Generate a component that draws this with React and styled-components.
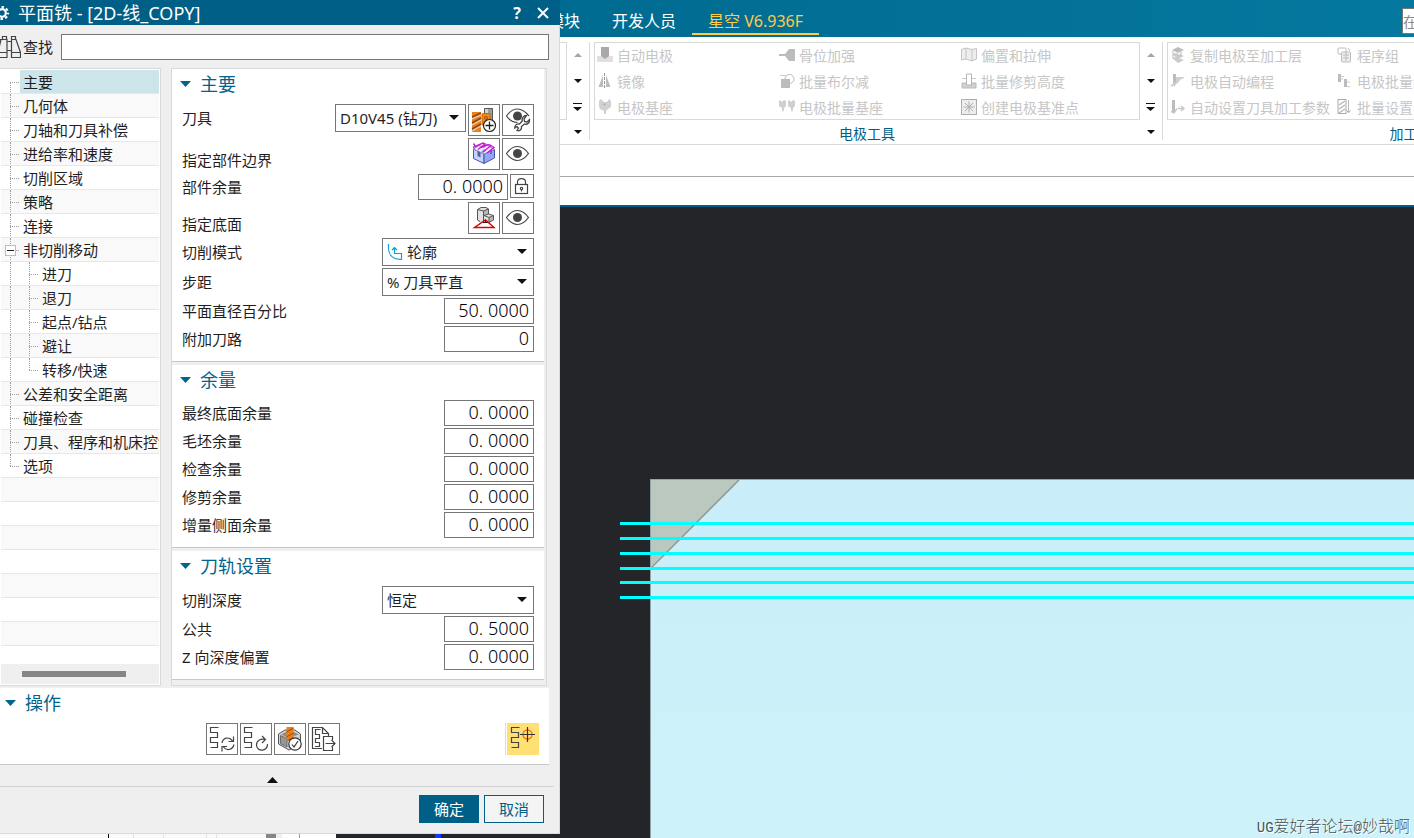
import React from "react";
import styled, { createGlobalStyle, css } from "styled-components";

const color = {
  brand: "#005f87",
  heading: "#00658c",
  accent: "#ffc94a",
  surface: "#efefef",
  line: "#d9d9d9",
  rule: "#c8c8c8",
  control: "#767676",
  text: "#1f1f1f",
  disabled: "#c6c6c6",
  canvas: "#242529",
};

const GlobalStyle = createGlobalStyle`
  *, *::before, *::after { box-sizing: border-box; }
  body {
    margin: 0;
    background: ${color.canvas};
    color: ${color.text};
    font: 15px/24px "Noto Sans", "Noto Sans CJK SC", sans-serif;
  }
  button, input, select { font: inherit; color: inherit; margin: 0; border-radius: 0; }
  h1, h2, h3, ul, p { margin: 0; padding: 0; font-weight: inherit; }
  ul { list-style: none; }
  svg { display: block; flex: none; }
`;

const Screen = styled.div`
  display: flex;
  min-height: 100vh;
  overflow: hidden;
`;

/* ---------- dialog ---------- */

const DialogColumn = styled.div`
  flex: none;
  width: 560px;
  display: flex;
  flex-direction: column;
`;

const DialogFrame = styled.section`
  background: ${color.surface};
  border-right: 1px solid ${color.line};
  border-bottom: 1px solid ${color.line};
`;

const TitleBar = styled.header`
  display: flex;
  align-items: center;
  height: 25px;
  margin-right: -1px;
  padding-right: 4px;
  background: ${color.brand};
  color: #fff;
  overflow: hidden;
`;

const Title = styled.h1`
  flex: 1;
  padding-left: 8px;
  font-size: 18px;
  line-height: 22px;
`;

const TitleButton = styled.button`
  display: grid;
  place-items: center;
  width: 26px;
  height: 24px;
  padding: 0;
  border: 0;
  background: none;
  font-size: 16px;
  font-weight: 700;
`;

const SearchRow = styled.div`
  display: flex;
  align-items: center;
  height: 43px;
  padding-right: 10px;
  label { padding: 0 8px 0 2px; }
`;

const SearchBox = styled.input`
  flex: 1;
  min-width: 0;
  height: 26px;
  padding: 0 6px;
  background: #fff;
  border: 1px solid ${color.control};
  outline: 0;
`;

const Panes = styled.div`
  display: flex;
  align-items: stretch;
  gap: 10px;
  padding-right: 12px;
`;

const NavPane = styled.nav`
  width: 161px;
  display: flex;
  flex-direction: column;
  justify-content: space-between;
  padding: 1px;
  background: #fff;
  border: 1px solid ${color.line};
  border-left: 0;
`;

const NavRow = styled.li`
  position: relative;
  display: flex;
  height: 24px;
  padding-left: ${(p) => (p.$level ? 38 : 19)}px;
  border-bottom: 1px solid #e8e8e8;
  background: #fff;
  overflow: hidden;
  &:nth-child(even) { background: #f9f9f9; }
`;

const dots = "#9c9c9c";

const Guide = styled.span`
  position: absolute;
  top: ${(p) => (p.$start ? 12 : 0)}px;
  left: ${(p) => (p.$level ? 28 : 9)}px;
  width: 9px;
  height: ${(p) => (p.$end ? 12 : 24)}px;
  border-left: 1px dotted ${dots};
`;

const Branch = styled.span`
  position: absolute;
  top: 12px;
  left: ${(p) => (p.$level ? 28 : 9)}px;
  width: 9px;
  border-top: 1px dotted ${dots};
`;

const Expander = styled.button`
  position: absolute;
  top: 7px;
  left: 4px;
  width: 11px;
  height: 11px;
  padding: 0;
  border: 1px solid #bdbdbd;
  background: #fff;
  &::before {
    content: "";
    position: absolute;
    inset: 4px 1px auto;
    border-top: 1px solid #222;
  }
`;

const NavLink = styled.a`
  flex: 1;
  padding-left: 3px;
  color: inherit;
  line-height: 24px;
  text-decoration: none;
  white-space: nowrap;
  overflow: hidden;
  ${(p) => p.$active && css`background: #cce5ea;`}
`;

const ScrollTrack = styled.div`
  height: 20px;
  padding: 7px 33px 7px 21px;
  background: ${color.surface};
  &::before {
    content: "";
    display: block;
    height: 6px;
    background: #868686;
  }
`;

const FormPane = styled.div`
  flex: 1;
  padding: 0 2px 5px 0;
  border: 1px solid ${color.line};
`;

const Group = styled.section`
  padding-bottom: 9px;
  background: #fff;
  border-bottom: 1px solid ${color.rule};
  & + & { margin-top: 3px; }
`;

const GroupHeading = styled.h2`
  display: flex;
  align-items: center;
  gap: 9px;
  height: 30px;
  margin-bottom: 5px;
  padding-left: ${(p) => (p.$flush ? 5 : 8)}px;
  color: ${color.heading};
  font-size: 18px;
  line-height: 28px;
`;

const Rows = styled.div`
  display: grid;
  gap: 2px;
  padding: 0 10px;
`;

const FieldRow = styled.div`
  display: flex;
  justify-content: space-between;
  align-items: ${(p) => (p.$align ? p.$align : "center")};
  min-height: ${(p) => (p.$tall ? 34 : 26)}px;
`;

const FieldLabel = styled.label`
  line-height: ${(p) => (p.$high ? 28 : 24)}px;
`;

const Controls = styled.div`
  display: flex;
  align-self: ${(p) => (p.$top ? "flex-start" : "auto")};
  align-items: flex-start;
  gap: 2px;
`;

const NumberInput = styled.input`
  width: 90px;
  height: 26px;
  padding: 0 4px 2px;
  border: 1px solid ${color.control};
  background: #fff;
  font-size: 18px;
  font-weight: 300;
  color: #000;
  line-height: 22px;
  text-align: right;
  outline: 0;
`;

const SelectWrap = styled.span`
  position: relative;
  display: block;
  width: ${(p) => (p.$narrow ? 131 : 152)}px;
  svg { position: absolute; pointer-events: none; }
  .arrow { right: 7px; top: 11px; }
  .glyph { left: 5px; top: 5px; }
`;

const SelectBox = styled.select`
  display: block;
  appearance: none;
  width: 100%;
  height: 28px;
  padding: 0 20px 0 ${(p) => (p.$glyph ? 24 : 4)}px;
  border: 1px solid ${color.control};
  background: #fff;
  outline: 0;
`;

const IconButton = styled.button`
  display: grid;
  place-items: center;
  width: ${(p) => p.$size || 32}px;
  height: ${(p) => p.$size || 32}px;
  padding: 0;
  border: 1px solid ${color.control};
  background: #fff;
  ${(p) =>
    p.$on &&
    css`
      border-color: #ffe075;
      background: #ffe075;
    `}
`;

const ActionGroup = styled(Group)`
  margin: 2px 10px 0 0;
`;

const ActionBar = styled.div`
  display: grid;
  grid-template-columns: 1fr auto 1fr;
  padding: 0 10px 0 6px;
`;

const ActionSet = styled.div`
  grid-column: 2;
  display: flex;
  gap: 2px;
`;

const ToggleSlot = styled.div`
  justify-self: end;
  padding-left: 1px;
  border-left: 1px solid #ffe075;
`;

const CollapseBar = styled.div`
  display: grid;
  justify-content: center;
  margin-right: 5px;
  padding-right: 10px;
  height: 22px;
  border-bottom: 1px solid #d2d2d2;
`;

const PlainButton = styled.button`
  display: grid;
  place-items: center;
  width: 24px;
  padding: 8px 0 0;
  border: 0;
  background: none;
`;

const Footer = styled.footer`
  display: flex;
  justify-content: flex-end;
  gap: 5px;
  padding: 8px 15px 10px;
`;

const FooterButton = styled.button`
  width: 60px;
  height: 28px;
  padding: 0;
  border: 1px solid ${color.brand};
  background: ${(p) => (p.$primary ? color.brand : "#f4f4f4")};
  color: ${(p) => (p.$primary ? "#fff" : color.brand)};
`;

/* sliver of the window that shows below the dialog */
const Behind = styled.div`
  flex: 1;
  display: flex;
  min-height: 4px;
  background: #fafafa;
`;

const BehindPart = styled.span`
  width: ${(p) => p.$w}px;
  background: ${(p) => p.$c || "transparent"};
`;

/* ---------- main window ---------- */

const MainWindow = styled.main`
  flex: 1;
  min-width: 0;
  display: flex;
  flex-direction: column;
  background: #fff;
  overflow: hidden;
`;

const TabBar = styled.div`
  display: flex;
  height: 37px;
  background: linear-gradient(90deg, #006b91, #05789f);
  color: #fff;
  font-size: 16px;
`;

const Tab = styled.a`
  flex: none;
  height: 35px;
  padding: 4px 16px 0;
  margin-left: ${(p) => (p.$cut ? -28 : 0)}px;
  border-bottom: 2px solid ${(p) => (p.$active ? color.accent : "transparent")};
  color: ${(p) => (p.$active ? color.accent : "#fff")};
  line-height: 34px;
  text-decoration: none;
  white-space: nowrap;
`;

const CommandSearch = styled.input`
  width: 12px;
  height: 26px;
  margin: 8px 0 0 auto;
  padding: 0;
  border: 1px solid #777;
  border-right: 0;
  background: #fff;
  color: #333;
  font-size: 14px;
  outline: 0;
  &::placeholder { color: #8a8a8a; }
`;

const Ribbon = styled.div`
  display: flex;
  height: 108px;
  padding-top: 5px;
  border-bottom: 1px solid ${color.line};
  font-size: 14px;
`;

const RibbonGroup = styled.section`
  flex: none;
  display: grid;
  grid-template-columns: auto 22px;
  grid-template-rows: 78px 24px;
`;

const Gallery = styled.div`
  display: grid;
  grid-template-columns: repeat(3, ${(p) => p.$col}px);
  grid-template-rows: repeat(3, 26px);
  min-width: 7px;
  box-shadow: inset 0 0 0 1px ${color.line};
`;

const Stub = styled(Gallery)`
  grid-template-columns: 7px;
  box-shadow: inset -1px 0 ${color.line}, inset 0 1px ${color.line}, inset 0 -1px ${color.line};
`;

const Command = styled.button`
  display: flex;
  align-items: center;
  gap: 4px;
  padding: 2px 0 0 3px;
  border: 0;
  background: none;
  color: ${color.disabled};
  line-height: 24px;
  white-space: nowrap;
  overflow: hidden;
  svg { margin-bottom: 2px; }
`;

const Pager = styled.div`
  display: grid;
  grid-template-rows: repeat(3, 26px);
  margin-right: 1px;
`;

const TinyButton = styled.button`
  display: grid;
  place-items: center;
  padding: 0;
  border: 0;
  background: none;
`;

const RibbonCaption = styled.h3`
  padding-top: 2px;
  color: ${color.brand};
  font-size: 14px;
  line-height: 24px;
  text-align: center;
`;

const Divider = styled.span`
  flex: none;
  width: 1px;
  height: 98px;
  margin-right: 4px;
  background: ${color.line};
`;

const Strip = styled.div`
  height: ${(p) => p.$h}px;
  border-bottom: ${(p) => p.$line};
`;

const Viewport = styled.div`
  position: relative;
  flex: 1;
  min-height: 320px;
  background: ${color.canvas};
  > svg { position: absolute; inset: 0; width: 100%; height: 100%; }
`;

const Watermark = styled.p`
  position: absolute;
  right: 4px;
  bottom: 0;
  color: #4b5356;
  font-size: 16px;
  font-weight: 300;
  line-height: 20px;
  white-space: nowrap;
  text-shadow: 1px 1px #fff;
  span { font-family: "Liberation Mono", monospace; font-size: 14px; }
`;

/* ---------- drawings ---------- */

const Triangle = ({ w = 11, h = 6, fill = "#111", up, bar, className }) => (
  <svg className={className} width={w} height={bar ? h + 4 : h} fill={fill} aria-hidden="true">
    {bar && <rect width={w} height="1" />}
    <path d={up ? `M0 ${h}L${w / 2} 0L${w} ${h}Z` : `M0 ${bar ? 4 : 0}H${w}L${w / 2} ${bar ? h + 4 : h}Z`} />
  </svg>
);

const Icon = ({ size = 26, children, ...rest }) => (
  <svg width={size} height={size} viewBox={`0 0 ${size} ${size}`} fill="none" stroke="#444" aria-hidden="true" {...rest}>
    {children}
  </svg>
);

const Gear = () => (
  <svg width="10" height="16" viewBox="0 0 10 16" fill="none" stroke="#fff" aria-hidden="true">
    <circle cx="2" cy="8" r="3.8" strokeWidth="2.2" />
    <circle cx="2" cy="8" r="6" strokeWidth="2.2" strokeDasharray="2.5 2.21" strokeDashoffset="1.2" />
  </svg>
);

const Binoculars = () => (
  <svg width="21" height="24" viewBox="0 0 21 24" fill="none" stroke="#444" strokeWidth="1.2" aria-hidden="true">
    <path d="M2.5 4V1.5h4V4M11.5 4V1.5h4V4M0 4.500H7L7 22.500H0M0 17.500H7M1 4.500L-2 17M7 6.500h4M7 15.500h4M11 4.500H16L20.500 17.500V22.500H11.500V4.500M11.500 17.500H20.500" />
  </svg>
);

const Eye = () => (
  <Icon>
    <path d="M1.500 12.500C5.500 7 9 5.500 12.500 5.500S19.500 7 23.500 12.500C19.500 18 16 19.500 12.500 19.500S5.500 18 1.500 12.500Z" strokeWidth="1.2" />
    <circle cx="12.500" cy="12.500" r="4.500" fill="#444" stroke="none" />
  </Icon>
);

const EyeWrench = () => (
  <Icon>
    <path d="M24 9C20 4 16.500 2 12.500 2S5 4 1.500 9C5 14 8.500 15.500 12.500 15.500" strokeWidth="1.200" />
    <circle cx="12.500" cy="9" r="4.500" fill="#444" stroke="none" />
    <path d="M21.500 8.500C18.500 8.500 16.500 11 17.200 14L14.500 17C11.500 16.500 9.500 18.500 9.800 21L12 19.500L13.500 21L12 23.500C14.500 24.500 17 22.500 16.500 19.500L19.500 17C22.500 18 25 15.500 24.500 12.500L22 15L19.500 14.500L19 12Z" fill="#fff" strokeWidth="1.300" />
  </Icon>
);

const ToolAdd = () => (
  <Icon>
    <path d="M13.500 1.500H21.500V16H17V10H13.500Z" fill="#9b9b9b" stroke="#555" />
    <path d="M14 2H17V10H14Z" fill="#d2d2d2" stroke="none" />
    <path d="M1 5H10V25H1Z" fill="#f07f14" stroke="none" />
    <path d="M1 10L10 6M1 16L10 11M1 22L10 17" stroke="#8d4a12" strokeWidth="1.500" />
    <path d="M1 12L10 8M1 18L10 13M1 24L10 19" stroke="#d9d9d9" strokeWidth="1.200" />
    <path d="M11 7L14 6.500H19V16L11 18Z" fill="#f08a1c" stroke="#c56508" />
    <circle cx="15" cy="11" r="1.500" stroke="#9e5207" />
    <circle cx="18.500" cy="18.500" r="6" fill="#fff" stroke="#222" strokeWidth="1.200" />
    <path d="M14.500 18.500H22.500M18.500 14.500V22.500" stroke="#222" strokeWidth="1.300" />
  </Icon>
);

const PartBoundary = () => (
  <Icon>
    <path d="M2.500 8L13 13V22.500L2.500 17.500Z" fill="#c2d2fc" stroke="#4a57a8" />
    <path d="M13 13L23.500 8.500V17L13 22.500Z" fill="#8ea8f6" stroke="#4a57a8" />
    <path d="M2.500 8L8 4.500L13 6.500L16 4L23.500 8.500L13 13Z" fill="#f1ecff" stroke="#8a80cc" />
    <path d="M6.500 10L9.500 11.500V16.500L6.500 15Z" fill="#55609a" stroke="none" />
    <path d="M9.500 11.500L13 8L15.500 9L11 13Z" fill="#9aa5dd" stroke="none" />
    <path d="M2 6.500L4.500 5.500L2.500 2.500M3 6L12 2L14 3L7 8.500M12 11L20 4.500L23 6.500L16 12M20 9V13M14 3L12 5.500L17 3.500L20 4.500" stroke="#cb19d2" strokeWidth="1.400" />
  </Icon>
);

const FloorPlane = () => (
  <Icon>
    <path d="M6.500 4.500L10 2.500H15L17.500 4V8.500L22 10.500V15L18 18H9L6.500 15.500Z" fill="#e2e2e2" stroke="none" />
    <path d="M12.500 5.500L17.500 4V9L13 11V17H12.500ZM18 12.500L22.500 10.500V15L18 17.500Z" fill="#b9b9b9" stroke="none" />
    <path d="M6.500 4.500L10 2.500H15L17.500 4V9M6.500 4.500V15L9 16.500M6.500 4.500L12.500 6L17.500 4M12.500 6V16M13 10.500L17.500 9L22.500 10.500V15L18 17.500M13 10.500L18 12.500L22.500 10.500M18 12.500V17" stroke="#555" />
    <path d="M3.500 22.500H23L14.500 15Z" stroke="#cb0909" strokeWidth="1.400" />
    <path d="M12 17.500H17M14.500 15V18" stroke="#222" />
  </Icon>
);

const Lock = () => (
  <svg width="16" height="18" viewBox="0 0 16 18" fill="none" stroke="#444" strokeWidth="1.200" aria-hidden="true">
    <rect x="1.500" y="7.500" width="12" height="9" />
    <path d="M3.500 7.500V5C3.500 .5 11.500 .5 11.500 5V7.500" />
    <circle cx="7.500" cy="11.500" r="1.200" />
    <path d="M7.500 12.500V14.500" />
  </svg>
);

const ProfileGlyph = () => (
  <svg className="glyph" width="17" height="18" viewBox="0 0 17 18" fill="none" stroke="#0aa3cc" strokeWidth="1.200" aria-hidden="true">
    <path d="M1.500 1V5C1.500 12 6 16.500 14.500 16.500V10.500H7.500V4.500M5 7L7.500 4.500L10 7" />
  </svg>
);

const Snake = () => (
  <path d="M9.500 1.500H1.500V6.500H8.500V11.500H1.500V16.500H8.500V21.500H1.500" strokeWidth="1.200" />
);

const Generate = () => (
  <Icon>
    <Snake />
    <path d="M13 17C14 11 20.500 10.500 23.500 15M24.500 10.500V15.500H19.500M25 18.500C23.500 24.500 17 25 14.500 21M13 25.500V20.500H18" strokeWidth="1.200" />
  </Icon>
);

const Replay = () => (
  <Icon>
    <Snake />
    <path d="M24.500 18C25 26 13.500 26 13.500 19C13.500 14 18 12.500 22.500 13.500M19 10L22.500 13.500L19 17" strokeWidth="1.200" />
  </Icon>
);

const Verify = () => (
  <Icon>
    <path d="M1.500 8L8 4H18L23.500 8V18L12 24L1.500 18Z" fill="#d4d4d4" stroke="#555" />
    <path d="M3.500 9.500L10 12.500V21L3.500 17.500Z" fill="#979797" stroke="#6b6b6b" />
    <path d="M4 8.500L9 6H17L21.500 8.500L12 12Z" fill="#8a8a8a" stroke="none" />
    <path d="M9.500 1H16.500V13L13 15.500L9.500 13Z" fill="#f07f14" stroke="none" />
    <path d="M9.500 6L16.500 2M9.500 11L16.500 7M10.500 14.500L16.500 11.500" stroke="#a6541a" strokeWidth="1.200" />
    <circle cx="18" cy="18" r="6.200" fill="#fff" stroke="#333" strokeWidth="1.200" />
    <path d="M15 18.500L17 21L21 15" stroke="#333" strokeWidth="1.200" />
  </Icon>
);

const ListOutput = () => (
  <Icon>
    <path d="M11 22.500H1.500V1.500H11.500L17.500 7.500V10M11.500 1.500V7.500H17.500" strokeWidth="1.200" />
    <path d="M9.500 3.500H4.500V8.500H8.500V12.500H4.500V16.500H8.500V20.500H4" strokeWidth="1.200" />
    <path d="M21.500 14V10.500H12.500V24.500H21.500V21M14.500 17.500H24M20.500 14L24 17.500L20.500 21" strokeWidth="1.200" />
  </Icon>
);

const PathPoint = () => (
  <Icon>
    <Snake />
    <circle cx="17.500" cy="8.500" r="4.500" stroke="#ef7d12" strokeWidth="1.500" />
    <path d="M10 8.500H25M17.500 1V16" stroke="#333" strokeWidth="1.200" />
  </Icon>
);

const grey = { fill: "#bcbcbc", stroke: "none" };

const commandArt = {
  electrode: (
    <>
      <path d="M0 9H16V15H0Z" fill="#e0e0e0" stroke="none" />
      <path d="M4 0H12V9L8 12L4 9Z" fill="#a9a9a9" stroke="none" />
    </>
  ),
  mirror: (
    <>
      <path d="M6 2V14H1.500ZM9 2V14H13.500Z" {...grey} />
      <path d="M7.500 0V16" stroke="#999" strokeDasharray="3 1" />
    </>
  ),
  base: (
    <>
      <path d="M2 2L4 0L7 3H10L12 0L14 2V8L11 10L9 12V15H7V12L3 10L2 7Z" fill="#d0d0d0" stroke="none" />
      <circle cx="7.500" cy="5.500" r="1" fill="#aaa" stroke="none" />
    </>
  ),
  rib: <path d="M0 7H6L10 2H16V14H10L6 9H0Z" {...grey} />,
  boolean: (
    <>
      <path d="M2 6H11V15H2Z" {...grey} />
      <circle cx="10.500" cy="6" r="4.500" stroke="#bbb" />
      <path d="M1 2.500H7" stroke="#ccc" />
    </>
  ),
  bases: (
    <>
      <path d="M0 2L1 1L3 3L5 1L7 2V7L5 9V11L4 13L3 11V9L0 7Z" fill="#cfcfcf" stroke="none" />
      <path d="M9 2L10 1L12 3L14 1L16 2V7L14 9V11L13 13L12 11V9L9 7Z" fill="#cfcfcf" stroke="none" />
    </>
  ),
  offset: (
    <path d="M.5 2.500L5 1V12L.5 13ZM5 1L11 2.500V14L5 12M11 2.500L15.500 1.500V12L11 14" fill="#eee" stroke="#c4c4c4" />
  ),
  trim: (
    <>
      <path d="M1 10H15V15H1Z" fill="#d0d0d0" stroke="#bbb" />
      <path d="M5.500 1H10.500V12H5.500Z" fill="#fff" stroke="#b5b5b5" />
      <path d="M1 5.500H5M11 5.500H15" stroke="#ccc" />
    </>
  ),
  datum: (
    <>
      <rect x=".5" y=".5" width="15" height="15" fill="#ededed" stroke="#adadad" />
      <path d="M8 2.500V13.500M2.500 8H13.500M4 4L12 12M12 4L4 12" stroke="#b0b0b0" />
    </>
  ),
  copy: (
    <>
      <path d="M2 3L8 0L14 3L8 6Z" {...grey} />
      <path d="M2 7L6 6L14 9L8 12ZM2 11L6 10L14 13L8 16Z" fill="#cbcbcb" stroke="none" />
      <path d="M3 4V11M11 5V9" stroke="#bbb" />
    </>
  ),
  auto: (
    <>
      <path d="M3 1H6V10L4.500 14L3 10Z" {...grey} />
      <path d="M6 4H14L13 6H11L7 11L6 10Z" fill="#d0d0d0" stroke="none" />
      <path d="M1 13L7 9" stroke="#ccc" strokeWidth="2" />
    </>
  ),
  params: (
    <>
      <path d="M2 1H5V13H2Z" {...grey} />
      <path d="M1 12.500L4 14L7 9.500M8 9.500H14M11 7L14 9.500L11 12" stroke="#c8c8c8" strokeWidth="1.500" />
    </>
  ),
  program: (
    <>
      <rect x="1" y="1" width="8" height="6" rx="1" stroke="#bdbdbd" />
      <rect x="4.500" y="5" width="9" height="10" rx="1" fill="#eee" stroke="#bdbdbd" />
      <path d="M6 8H12M6 11H12M9 5V14M11 1L13 4" stroke="#bdbdbd" />
    </>
  ),
  batch: (
    <>
      <path d="M1 1H4V9H1ZM7 6H10V14H7Z" {...grey} />
      <path d="M4 3.500H7M4 6H6M10 9H13M10 13.500H13" stroke="#ccc" />
    </>
  ),
  settings: (
    <>
      <rect x="1" y=".5" width="8" height="14" stroke="#ababab" />
      <path d="M2 6L8 2M2 10L8 6M2 14L8 10" stroke="#b8b8b8" strokeWidth="1.500" />
      <path d="M11.500 1V14M9.500 11L11.500 14L13.500 11" stroke="#bbb" />
    </>
  ),
};

const Part = () => (
  <svg aria-hidden="true">
    <defs>
      <linearGradient id="face" x1="0" x2="0" y1="0" y2="1">
        <stop offset="0" stopColor="#caeef9" />
        <stop offset=".5" stopColor="#cef2fa" />
      </linearGradient>
    </defs>
    <rect x="90.500" y="272.500" width="100%" height="100%" fill="url(#face)" stroke="#8ea5aa" />
    <path d="M91 273H179L91 360Z" fill="#bac8bf" />
    <path d="M179 273L91 361" stroke="#8b9a96" strokeWidth="1.500" />
    {[317, 332, 347, 362, 376, 391].map((y) => (
      <line key={y} x1="60" x2="100%" y1={y - 0.5} y2={y - 0.5} stroke="#00ffff" strokeWidth="3" />
    ))}
  </svg>
);

/* ---------- composed parts ---------- */

const navItems = [
  { text: "主要", active: true, start: true },
  { text: "几何体" },
  { text: "刀轴和刀具补偿" },
  { text: "进给率和速度" },
  { text: "切削区域" },
  { text: "策略" },
  { text: "连接" },
  { text: "非切削移动", open: true },
  { text: "进刀", level: 1 },
  { text: "退刀", level: 1 },
  { text: "起点/钻点", level: 1 },
  { text: "避让", level: 1 },
  { text: "转移/快速", level: 1, endChild: true },
  { text: "公差和安全距离" },
  { text: "碰撞检查" },
  { text: "刀具、程序和机床控制" },
  { text: "选项", end: true },
  ...Array.from({ length: 7 }, () => ({})),
];

const Navigation = () => (
  <NavPane>
    <ul>
      {navItems.map((item, i) => (
        <NavRow key={i} $level={item.level}>
          {item.text && (
            <>
              <Guide $start={item.start} $end={item.end} />
              {item.level && <Guide $level={1} $end={item.endChild} />}
              <Branch $level={item.level} />
              {item.open && <Expander aria-label="折叠" />}
              <NavLink href="#" $active={item.active}>{item.text}</NavLink>
            </>
          )}
        </NavRow>
      ))}
    </ul>
    <ScrollTrack />
  </NavPane>
);

const Heading = ({ flush, children }) => (
  <GroupHeading $flush={flush}>
    <Triangle fill={color.heading} />
    {children}
  </GroupHeading>
);

const NumberField = ({ id, label, value }) => (
  <FieldRow>
    <FieldLabel htmlFor={id}>{label}</FieldLabel>
    <NumberInput id={id} defaultValue={value} />
  </FieldRow>
);

const Dropdown = ({ id, value, narrow, glyph }) => (
  <SelectWrap $narrow={narrow}>
    <SelectBox id={id} $glyph={!!glyph} defaultValue={value}>
      <option>{value}</option>
    </SelectBox>
    {glyph}
    <Triangle className="arrow" w={10} h={5} />
  </SelectWrap>
);

const SelectField = ({ id, label, ...rest }) => (
  <FieldRow>
    <FieldLabel htmlFor={id}>{label}</FieldLabel>
    <Dropdown id={id} {...rest} />
  </FieldRow>
);

const PickField = ({ id, label, icon }) => (
  <FieldRow $tall $align="flex-end">
    <FieldLabel htmlFor={id}>{label}</FieldLabel>
    <Controls $top>
      <IconButton id={id}>{icon}</IconButton>
      <IconButton aria-label="显示"><Eye /></IconButton>
    </Controls>
  </FieldRow>
);

const PagerButtons = () => (
  <Pager>
    <TinyButton aria-label="上一行"><Triangle w={8} h={4} up fill="#a5a5a5" /></TinyButton>
    <TinyButton aria-label="下一行"><Triangle w={8} h={4} /></TinyButton>
    <TinyButton aria-label="更多"><Triangle w={9} h={4} bar /></TinyButton>
  </Pager>
);

const CommandButton = ({ art, text }) => (
  <Command>
    <Icon size={16}>{commandArt[art]}</Icon>
    {text}
  </Command>
);

const CommandGroup = ({ caption, col, items }) => (
  <RibbonGroup>
    <Gallery $col={col}>
      {items.map((item, i) =>
        item ? <CommandButton key={i} art={item[0]} text={item[1]} /> : <span key={i} />
      )}
    </Gallery>
    <PagerButtons />
    <RibbonCaption>{caption}</RibbonCaption>
    <TinyButton aria-label="组选项"><Triangle w={8} h={4} /></TinyButton>
  </RibbonGroup>
);

const electrodeTools = [
  ["electrode", "自动电极"], ["rib", "骨位加强"], ["offset", "偏置和拉伸"],
  ["mirror", "镜像"], ["boolean", "批量布尔减"], ["trim", "批量修剪高度"],
  ["base", "电极基座"], ["bases", "电极批量基座"], ["datum", "创建电极基准点"],
];

const machiningTools = [
  ["copy", "复制电极至加工层"], ["program", "程序组"], null,
  ["auto", "电极自动编程"], ["batch", "电极批量编程"], null,
  ["params", "自动设置刀具加工参数"], ["settings", "批量设置参数"], null,
];

export default function App() {
  return (
    <Screen>
      <GlobalStyle />
      <DialogColumn>
        <DialogFrame>
          <TitleBar>
            <Gear />
            <Title>平面铣 - [2D-线_COPY]</Title>
            <TitleButton aria-label="帮助">?</TitleButton>
            <TitleButton aria-label="关闭">
              <svg width="12" height="12" stroke="#fff" strokeWidth="2" aria-hidden="true">
                <path d="M1 1L11 11M11 1L1 11" />
              </svg>
            </TitleButton>
          </TitleBar>
          <SearchRow>
            <Binoculars />
            <label htmlFor="find">查找</label>
            <SearchBox id="find" />
          </SearchRow>
          <Panes>
            <Navigation />
            <FormPane>
              <Group>
                <Heading>主要</Heading>
                <Rows>
                  <FieldRow $align="flex-start">
                    <FieldLabel $high htmlFor="tool">刀具</FieldLabel>
                    <Controls>
                      <Dropdown id="tool" narrow value="D10V45 (钻刀)" />
                      <IconButton aria-label="新建刀具"><ToolAdd /></IconButton>
                      <IconButton aria-label="编辑显示"><EyeWrench /></IconButton>
                    </Controls>
                  </FieldRow>
                  <PickField id="boundary" label="指定部件边界" icon={<PartBoundary />} />
                  <FieldRow>
                    <FieldLabel htmlFor="partStock">部件余量</FieldLabel>
                    <Controls>
                      <NumberInput id="partStock" defaultValue="0. 0000" />
                      <IconButton $size={24} aria-label="锁定"><Lock /></IconButton>
                    </Controls>
                  </FieldRow>
                  <PickField id="floor" label="指定底面" icon={<FloorPlane />} />
                  <SelectField id="pattern" label="切削模式" value="轮廓" glyph={<ProfileGlyph />} />
                  <SelectField id="stepover" label="步距" value="% 刀具平直" />
                  <NumberField id="percent" label="平面直径百分比" value="50. 0000" />
                  <NumberField id="passes" label="附加刀路" value="0" />
                </Rows>
              </Group>
              <Group>
                <Heading>余量</Heading>
                <Rows>
                  <NumberField id="floorStock" label="最终底面余量" value="0. 0000" />
                  <NumberField id="blankStock" label="毛坯余量" value="0. 0000" />
                  <NumberField id="checkStock" label="检查余量" value="0. 0000" />
                  <NumberField id="trimStock" label="修剪余量" value="0. 0000" />
                  <NumberField id="sideStock" label="增量侧面余量" value="0. 0000" />
                </Rows>
              </Group>
              <Group>
                <Heading>刀轨设置</Heading>
                <Rows>
                  <SelectField id="depth" label="切削深度" value="恒定" />
                  <NumberField id="common" label="公共" value="0. 5000" />
                  <NumberField id="zOffset" label="Z 向深度偏置" value="0. 0000" />
                </Rows>
              </Group>
            </FormPane>
          </Panes>
          <ActionGroup>
            <Heading flush>操作</Heading>
            <ActionBar>
              <ActionSet>
                <IconButton aria-label="生成"><Generate /></IconButton>
                <IconButton aria-label="重播"><Replay /></IconButton>
                <IconButton aria-label="确认"><Verify /></IconButton>
                <IconButton aria-label="列表"><ListOutput /></IconButton>
              </ActionSet>
              <ToggleSlot>
                <IconButton $on aria-label="显示刀轨点"><PathPoint /></IconButton>
              </ToggleSlot>
            </ActionBar>
          </ActionGroup>
          <CollapseBar>
            <PlainButton aria-label="收起"><Triangle up /></PlainButton>
          </CollapseBar>
          <Footer>
            <FooterButton $primary>确定</FooterButton>
            <FooterButton>取消</FooterButton>
          </Footer>
        </DialogFrame>
        <Behind>
          <BehindPart $w={108} />
          <BehindPart $w={1} $c="#000" />
          <BehindPart $w={24} />
          <BehindPart $w={1} $c="#e4e4e4" />
          <BehindPart $w={29} />
          <BehindPart $w={1} $c="#e4e4e4" />
          <BehindPart $w={42} />
          <BehindPart $w={1} $c="#e4e4e4" />
          <BehindPart $w={9} />
          <BehindPart $w={1} $c="#e4e4e4" />
          <BehindPart $w={49} />
          <BehindPart $w={10} $c="#868686" />
          <BehindPart $w={6} $c="#efefef" />
          <BehindPart $w={17} $c="#fff" />
          <BehindPart $w={1} $c="#999" />
          <BehindPart $w={36} $c="#fff" />
          <BehindPart $w={99} $c={color.canvas} />
          <BehindPart $w={6} $c="#0a3cff" />
          <BehindPart $w={119} $c={color.canvas} />
        </Behind>
      </DialogColumn>

      <MainWindow>
        <TabBar>
          <Tab href="#" $cut>模块</Tab>
          <Tab href="#">开发人员</Tab>
          <Tab href="#" $active>星空 V6.936F</Tab>
          <CommandSearch aria-label="查找命令" placeholder="在菜单上查找" />
        </TabBar>
        <Ribbon>
          <RibbonGroup>
            <Stub />
            <PagerButtons />
            <span />
            <TinyButton aria-label="组选项"><Triangle w={8} h={4} /></TinyButton>
          </RibbonGroup>
          <Divider />
          <CommandGroup caption="电极工具" col={182} items={electrodeTools} />
          <Divider />
          <CommandGroup caption="加工工具" col={167} items={machiningTools} />
        </Ribbon>
        <Strip $h={32} $line="1px solid #a9a9a9" />
        <Strip $h={30} $line={`2px solid ${color.brand}`} />
        <Viewport>
          <Part />
          <Watermark><span>UG</span>爱好者论坛<span>@</span>妙哉啊</Watermark>
        </Viewport>
      </MainWindow>
    </Screen>
  );
}
